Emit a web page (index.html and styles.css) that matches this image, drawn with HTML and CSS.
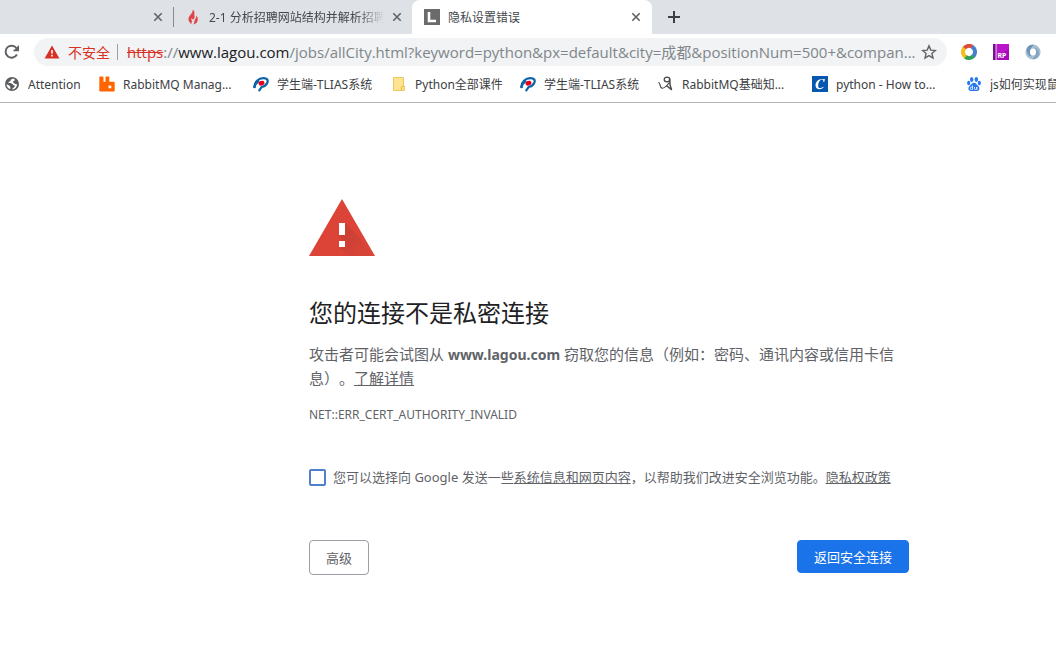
FILE: index.html
```html
<!DOCTYPE html>
<html lang="zh-CN">
<head>
<meta charset="utf-8">
<title>隐私设置错误</title>
<link rel="stylesheet" href="styles.css">
</head>
<body>
<svg class="defs" width="0" height="0" aria-hidden="true">
  <symbol id="cross" viewBox="0 0 10 10"><path d="M1.3 1.3l7.4 7.4M8.7 1.3L1.3 8.7" fill="none" stroke="currentColor" stroke-width="1.6"/></symbol>
  <symbol id="tlias" viewBox="0 0 16 16">
    <path d="M1.500 11C1.200 6 5.500 2.300 10.300 2.200c4-.1 5.100 2 4 4.600-1 2.500-3.300 3.700-5.600 4.100L6.300 14.300" fill="none" stroke="#0c64a8" stroke-width="2.200" stroke-linecap="round"/>
    <path d="M1.500 11C2 8.500 3.200 6.800 5 5.500" fill="none" stroke="#0c64a8" stroke-width="2.600" stroke-linecap="round"/>
    <ellipse cx="8.500" cy="7.200" rx="3" ry="2.300" transform="rotate(-20 8.500 7.200)" fill="#e60020"/>
  </symbol>
</svg>

<header class="browser">
  <div class="tabs">
    <div class="tab tab-first">
      <button class="close" aria-label="关闭"><svg width="10" height="10"><use href="#cross"/></svg></button>
    </div>
    <div class="tab tab-course">
      <svg class="icon" width="16" height="16" viewBox="0 0 16 16"><path d="M7.500.5c.8 2.300-.6 3.500-2.200 5.400C3.700 7.800 3 9.600 3.700 11.500c.5 1.500 1.600 2.900 3 3.900-.5-1.300-.3-2.400.5-3.500-.9-.6-1.200-1.700-.6-2.900.3 1 .9 1.400 1.700 1.400C9.500 9.700 10 7.600 9.200 5.200 10 3.500 9.200 1.600 7.500.5zM11.200 6.500c.3 1.800-.4 3-1.300 4.200-.6 1.100-.5 1.800-.7 2.700-.2.900-.6 1.500-1.100 2.100 2.200-.4 4.200-2 4.600-4.100.4-1.900-.2-3.500-1.500-4.900z" fill="#e04545"/></svg>
      <span class="tab-title fade">2-1 分析招聘网站结构并解析招聘信息</span>
      <button class="close" aria-label="关闭"><svg width="10" height="10"><use href="#cross"/></svg></button>
    </div>
    <div class="tab tab-active">
      <svg class="icon" width="16" height="16" viewBox="0 0 16 16"><path d="M0 0h16v16H0z" fill="#6b6b6b"/><path d="M5 3v9h7" fill="none" stroke="#fff" stroke-width="2.600"/></svg>
      <span class="tab-title">隐私设置错误</span>
      <button class="close" aria-label="关闭"><svg width="10" height="10"><use href="#cross"/></svg></button>
    </div>
    <button class="new-tab" aria-label="新标签页"><svg width="12" height="12" viewBox="0 0 12 12"><path d="M6 0v12M0 6h12" stroke="#3c4043" stroke-width="2"/></svg></button>
  </div>

  <div class="toolbar">
    <button class="reload" aria-label="重新加载"><svg width="16" height="16" viewBox="0 0 16 16"><path d="M12.900 10.500A6 6 0 1 1 12.400 4" fill="none" stroke="#5f6368" stroke-width="2"/><path d="M15 1v6.300H8.700z" fill="#5f6368"/></svg></button>
    <div class="address">
      <svg class="alert" width="16" height="16" viewBox="0 0 16 16"><path d="M8 1.500L15.400 14.500H.6z" fill="#d93025"/><path d="M7.200 6h1.600v3.600H7.200zM7.200 10.800h1.600v1.700H7.200z" fill="#fff"/></svg>
      <span class="insecure">不安全</span>
      <div class="url"><s>https</s>://<span class="host">www.lagou.com</span>/jobs/allCity.html?keyword=python&amp;px=default&amp;city=成都&amp;positionNum=500+&amp;compan...</div>
      <button class="star" aria-label="收藏"><svg width="16" height="16" viewBox="0 0 16 16"><path d="M8 1.900l1.800 4.200 4.600.4-3.500 3 1.100 4.500-4-2.400L4 14l1.100-4.500-3.500-3 4.600-.4z" fill="none" stroke="#5f6368" stroke-width="1.400"/></svg></button>
    </div>
    <div class="extensions">
      <svg width="16" height="16" viewBox="0 0 16 16" fill="none" stroke-width="4"><path d="M3 4.500A6 6 0 0 1 11.500 3" stroke="#dd4b39"/><path d="M11 2.800A6 6 0 0 1 12 12.500" stroke="#4a7fc9"/><path d="M12.300 12.200A6 6 0 0 1 4.200 12.600" stroke="#2fa05a"/><path d="M4.500 12.800A6 6 0 0 1 3.400 4" stroke="#f5bd1c"/></svg>
      <svg width="16" height="16" viewBox="0 0 16 16"><path d="M0 0h16v16H0z" fill="#a90bb9"/><path d="M4 0h12v5L4 13z" fill="#b816c8"/><path d="M0 0h2.600v16H0z" fill="#76108c"/><path d="M2.600 0h1v16h-1z" fill="#f0c8f3"/><text class="rp" x="4.500" y="14">RP</text></svg>
      <svg width="16" height="16" viewBox="0 0 16 16"><circle cx="8" cy="8" r="5.600" fill="none" stroke="#a9bfd3" stroke-width="4"/><path d="M9 1C4 0 1 4 2 8c.7 3 3 4.500 5 4.500C4 10 4 5 9 1z" fill="#6f94b5"/><path d="M7 15c5 1 8-3 7-7-.7-3-3-4.500-5-4.500C12 6 12 11 7 15z" fill="#86a5c2"/></svg>
    </div>
  </div>

  <nav class="bookmarks">
    <a href="#" class="bm bm-short"><svg width="16" height="16" viewBox="0 0 16 16"><circle cx="8" cy="8" r="7" fill="#5a5d61"/><path d="M9 2.500c-.6.500-1.500.7-2.200 1.300-.5.500.2 1-.5 1.500-.8.500-2 .4-1.800 1.500.3 1 2 .3 3.300.8 1 .4.900 1.300 2 1.600 1.200.3 1.300 1 .5 1.900-.8.800-1.800.9-2.200 2.500 3.200-.4 5-2.900 5-5.600-1 .6-2 .2-2.400-.5-.5-.8-1.600-.6-1.700-1.600 0-1 1.700-.7 1.800-1.900.1-.6-.8-1-1.800-1.500zM2.500 8.200c1.300.5 2.500 1 3.500 2 .8.900.1 2 .3 3-2-.6-3.700-2.500-3.800-5z" fill="#fff"/></svg><span>Attention</span></a>
    <a href="#" class="bm bm-long"><svg width="16" height="16" viewBox="0 0 16 16"><path d="M.3 1.200q0-.7.700-.7h2.800q.7 0 .7.700v4.600h2V1.200q0-.7.700-.7h2.400q.7 0 .7.700v4.600h4.500q.9 0 .9.900v8q0 .8-.9.800H1.200q-.9 0-.9-.8z" fill="#f60"/><rect x="9.500" y="9.500" width="2.800" height="2.800" rx=".6" fill="#fff"/></svg><span>RabbitMQ Manag...</span></a>
    <a href="#" class="bm bm-tlias"><svg width="16" height="16"><use href="#tlias"/></svg><span>学生端-TLIAS系统</span></a>
    <a href="#" class="bm bm-folder"><svg width="16" height="16" viewBox="0 0 16 16"><path d="M2.500 1.500h10v9h1v4h-11z" fill="#fee48e" stroke="#ebc760"/><path d="M10.500 14.500v-3.200q0-.8 1-.8h1.500" fill="none" stroke="#e2b740"/></svg><span>Python全部课件</span></a>
    <a href="#" class="bm bm-tlias"><svg width="16" height="16"><use href="#tlias"/></svg><span>学生端-TLIAS系统</span></a>
    <a href="#" class="bm bm-long"><svg width="16" height="16" viewBox="0 0 16 16" fill="none" stroke="#484848" stroke-linecap="round"><path d="M.8 6.500c1.400 0 .8 5 3.200 5.700 2.400.5 5-2.700 7-5.200" stroke-width="1.200"/><ellipse cx="9" cy="3.500" rx="2.800" ry="2.300" stroke-width="1.300"/><path d="M11.600 3c0 3.500.5 7.500 1.900 10.500M9 10l4.300 3.500" stroke-width="1.500"/></svg><span>RabbitMQ基础知...</span></a>
    <a href="#" class="bm bm-long"><svg width="16" height="16" viewBox="0 0 16 16"><path d="M0 0h16v16H0z" fill="#0756b0"/><path d="M12.200 6l.8-3-1 .3C8 1.800 3.500 5 3.500 9.300c0 2.800 1.700 4 4 4 1.700 0 3-.7 4.200-2l-.6-.6c-3 2.500-5.100 1.500-4.900-1.500.2-3.200 2.200-5.800 3.900-5.600 1 .1 1.400.9 1.300 2.300z" fill="#fff"/></svg><span>python - How to...</span></a>
    <a href="#" class="bm bm-last"><svg width="16" height="16" viewBox="0 0 16 16" fill="#2878f0"><ellipse cx="5.700" cy="3.600" rx="1.700" ry="2.500"/><ellipse cx="10.300" cy="3.500" rx="1.700" ry="2.400"/><ellipse cx="2.700" cy="7" rx="1.600" ry="2.200"/><ellipse cx="13.300" cy="7" rx="1.600" ry="2.200"/><path d="M8 6.800c2 0 2.400 1.700 4 3 2.500 2.200 1.500 5.200-1 5.200H5c-2.700 0-3.600-3-1.200-5.200C5.500 8.500 6 6.800 8 6.800z"/><path d="M6.500 9.500v4H5.300c-1.500 0-1.500-2.400 0-2.400h1.200M8.500 11v1.800c0 1 2.300 1 2.300 0V11v2.500" fill="none" stroke="#fff" stroke-width=".8"/></svg><span>js如何实现鼠标移动</span></a>
  </nav>
</header>

<main class="warning">
  <svg class="triangle" width="66" height="57" viewBox="0 0 66 57">
    <defs><linearGradient id="shade" x1="0" y1="0" x2="1" y2="1"><stop offset="0" stop-color="#b93a2f"/><stop offset=".8" stop-color="#d34337"/></linearGradient></defs>
    <path d="M33 0l33 57H0z" fill="#db4437"/>
    <path d="M36 24l16 16L61.800 57H39.500L30 48l6-1-6-11 6-1z" fill="url(#shade)" opacity=".6"/>
    <path d="M30 24h6v12h-6zM30 42h6v6h-6z" fill="#fff"/>
  </svg>
  <h1>您的连接不是私密连接</h1>
  <p class="message">攻击者可能会试图从 <strong>www.lagou.com</strong> 窃取您的信息（例如：密码、通讯内容或信用卡信息）。<a href="#">了解详情</a></p>
  <p class="code">NET::ERR_CERT_AUTHORITY_INVALID</p>
  <div class="report">
    <input type="checkbox" id="report">
    <label for="report">您可以选择向 Google 发送一些<a href="#">系统信息和网页内容</a>，以帮助我们改进安全浏览功能。<a href="#">隐私权政策</a></label>
  </div>
  <div class="actions">
    <button class="btn">高级</button>
    <button class="btn btn-primary">返回安全连接</button>
  </div>
</main>
</body>
</html>
```
FILE: styles.css
```css
* {
  box-sizing: border-box;
}

body {
  margin: 0;
  overflow-x: hidden;
  background: #fff;
  color: #5f6368;
  font-family: "Noto Sans", "Noto Sans CJK SC", sans-serif;
  font-size: 12px;
}

button {
  padding: 0;
  border: 0;
  background: none;
  color: inherit;
  font: inherit;
}

svg {
  display: block;
  flex: none;
}

.defs {
  position: absolute;
}

.browser {
  border-bottom: 1px solid #b4b4b4;
}

/* Tab strip */
.tabs {
  display: flex;
  height: 34px;
  background: #dee1e6;
}

.tab {
  display: flex;
  align-items: center;
  color: #45494d;
}

.tab-first {
  width: 174px;
  justify-content: flex-end;
  padding-right: 11px;
  background: linear-gradient(#888c91, #888c91) right center / 1px 20px no-repeat;
}

.tab-course {
  width: 238px;
  padding: 0 10px 0 11px;
}

.tab-active {
  width: 240px;
  padding: 0 11px 0 12px;
  border-radius: 8px 8px 0 0;
  background: #fff;
}

.tab-title {
  flex: 1;
  min-width: 0;
  margin: 0 8px;
  overflow: hidden;
  white-space: nowrap;
}

.fade {
  mask-image: linear-gradient(to right, #000 85%, transparent);
}

.close {
  color: #5f6368;
}

.new-tab {
  margin-left: 16px;
}

/* Toolbar */
.toolbar {
  display: flex;
  align-items: center;
  height: 36px;
}

.reload {
  margin: 0 14px 0 4px;
}

.address {
  display: flex;
  flex: 1;
  align-items: center;
  min-width: 0;
  height: 28px;
  padding: 0 10px;
  border-radius: 14px;
  background: #f1f3f4;
  color: #80868b;
  font-size: 14px;
}

.insecure {
  flex: none;
  margin: 0 9px 0 8px;
  padding-right: 8px;
  background: linear-gradient(#9aa0a6, #9aa0a6) right center / 1px 16px no-repeat;
  color: #d93025;
}

.url {
  flex: 1;
  min-width: 0;
  overflow: hidden;
  font-family: "Open Sans", "Noto Sans CJK SC", sans-serif;
  font-size: 15px;
  line-height: 20px;
  text-overflow: ellipsis;
  white-space: nowrap;
}

.url s {
  color: #d93025;
}

.host {
  color: #202124;
}

.extensions {
  display: flex;
  gap: 16px;
  padding: 0 15px 0 14px;
}

.rp {
  fill: #fff;
  font-size: 7px;
  font-weight: bold;
}

/* Bookmarks */
.bookmarks {
  display: flex;
  height: 32px;
  padding: 0 0 4px 4px;
  overflow: hidden;
}

.bm {
  display: flex;
  flex: none;
  gap: 8px;
  align-items: center;
  padding-right: 16px;
  color: #3c4043;
  text-decoration: none;
  white-space: nowrap;
}

.bm span {
  overflow: hidden;
  text-overflow: ellipsis;
}

.bm-short {
  width: 95px;
}

.bm-long {
  width: 154px;
}

.bm-tlias {
  width: 138px;
}

.bm-folder {
  width: 129px;
}

/* Warning page */
.warning {
  max-width: 909px;
  padding: 96px 0 40px 309px;
}

h1 {
  margin: 40px 0 12px;
  color: #202124;
  font-size: 24px;
  font-weight: 400;
  line-height: 34px;
}

p {
  margin: 0;
}

.warning a {
  color: inherit;
}

.message {
  font-size: 15px;
  line-height: 24px;
  text-spacing-trim: space-all;
}

.message strong {
  font-size: 14px;
  line-height: 16px;
}

.code {
  margin-top: 13px;
  line-height: 24px;
}

.report {
  display: flex;
  gap: 7px;
  align-items: center;
  margin-top: 38px;
  font-size: 13px;
  line-height: 24px;
}

.report input {
  flex: none;
  width: 17px;
  height: 17px;
  margin: 0;
  border: 2px solid #5080cc;
  border-radius: 2px;
  appearance: none;
  background: #fff;
}

.actions {
  display: flex;
  justify-content: space-between;
  align-items: flex-start;
  margin-top: 51px;
}

.btn {
  height: 35px;
  padding: 0 16px;
  border: 1px solid #9aa0a6;
  border-radius: 4px;
  font-size: 13px;
}

.btn-primary {
  height: 33px;
  border-color: #1a73e8;
  background: #1a73e8;
  color: #fff;
}
```
